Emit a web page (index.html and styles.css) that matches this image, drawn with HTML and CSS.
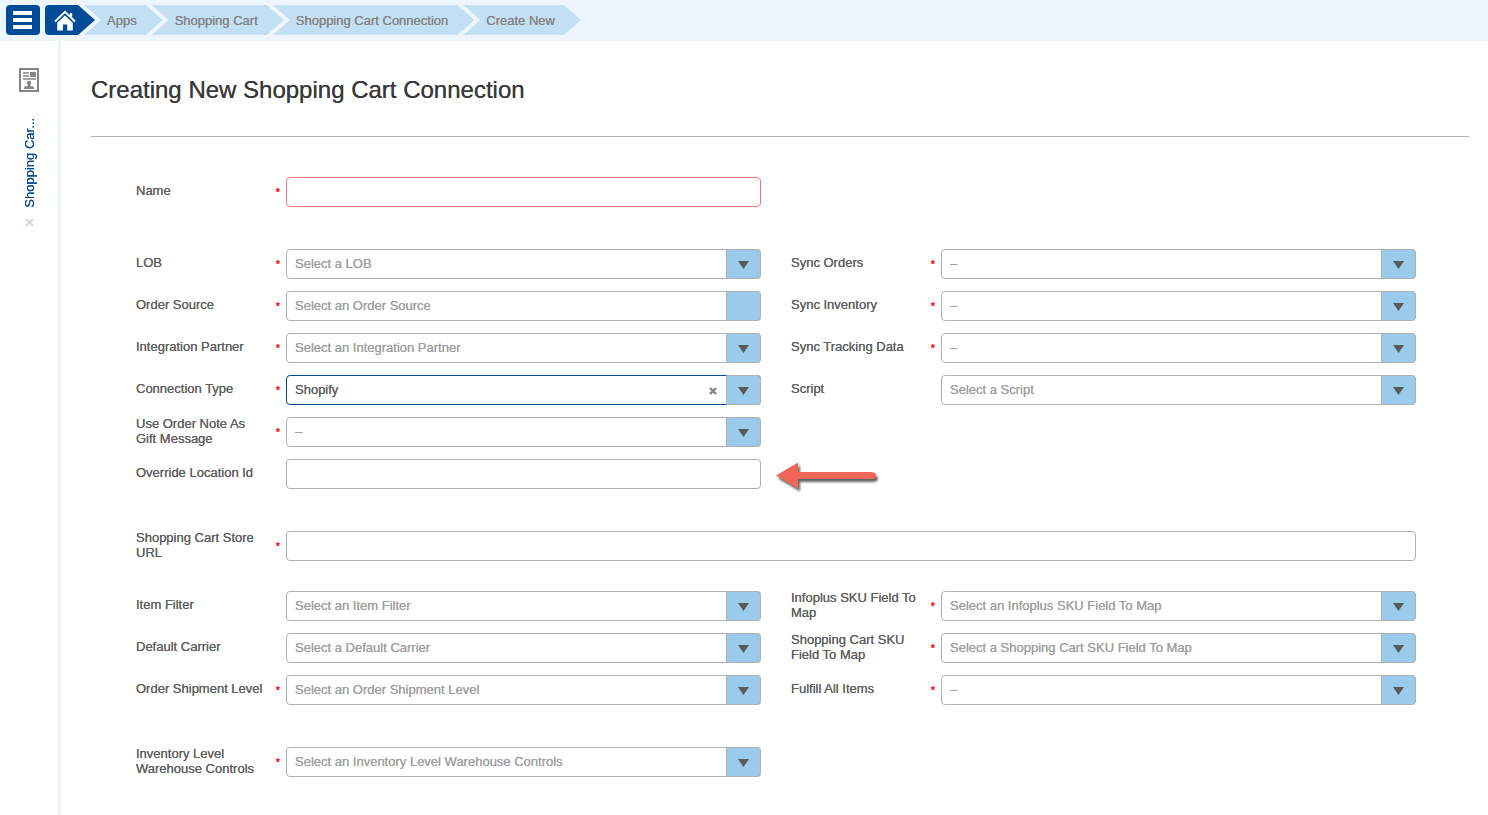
FILE: index.html
```html
<!DOCTYPE html>
<html lang="en">
<head>
<meta charset="utf-8">
<meta name="viewport" content="width=device-width, initial-scale=1">
<title>Creating New Shopping Cart Connection</title>
<link rel="stylesheet" href="styles.css">
</head>
<body>
<svg class="defs" aria-hidden="true">
  <symbol id="caret" viewBox="0 0 11 8"><path d="M0 0h11L5.500 8z" fill="#5a5a5a"/></symbol>
</svg>
<header class="topbar">
  <button class="menu" type="button" aria-label="Menu">
    <svg width="20" height="18" viewBox="0 0 20 18"><path d="M0 0h19v4H0zM0 7h19v4H0zM0 14h19v4H0z" fill="#fff"/></svg>
  </button>
  <nav class="crumbs" aria-label="Breadcrumb">
    <a class="home" href="#" aria-label="Home">
      <svg width="22" height="21" viewBox="0 0 22 21"><path d="M1 11.500L11 1.800l10 9.700" fill="none" stroke="#fff" stroke-width="2"/><path d="M15.800 3h2.400v4.500l-2.400-2.300z" fill="#fff"/><path d="M3.200 12.800L11 5.600l7.800 7.200V20.500h-5.600v-6H9v6H3.200z" fill="#fff"/></svg>
    </a>
    <a class="crumb" href="#">Apps</a>
    <a class="crumb" href="#">Shopping Cart</a>
    <a class="crumb" href="#">Shopping Cart Connection</a>
    <a class="crumb" href="#">Create New</a>
  </nav>
</header>
<div class="body">
  <aside class="side">
    <svg width="20" height="24" viewBox="0 0 20 24"><path d="M1 1h18v22H1z" fill="#fff" stroke="#858585" stroke-width="2"/><path d="M4 5h6M4 8h6M4 11h13" stroke="#858585" stroke-width="1.400"/><path d="M11 4h6v5h-6z" fill="#858585"/><circle cx="10" cy="15" r="2.200" fill="#858585"/><path d="M9 16h2l.5 2.300h3L15 21H5l.5-2.700h3z" fill="#858585"/></svg>
    <a class="tab" href="#">Shopping Car...</a>
    <button class="close" type="button" aria-label="Close tab">
      <svg width="9" height="9" viewBox="0 0 9 9"><path d="M1 1l7 7M8 1L1 8" stroke="#c9d8e8" stroke-width="1.800"/></svg>
    </button>
  </aside>
  <main class="main">
    <h1>Creating New Shopping Cart Connection</h1>
    <form class="form">
      <div class="cols">
        <div class="col">
          <div class="row"><label for="name">Name</label><i class="req">*</i><input class="field invalid" id="name" type="text"></div>
        </div>
      </div>
      <div class="cols">
        <div class="col">
          <div class="row"><label for="lob">LOB</label><i class="req">*</i><div class="combo"><select class="field" id="lob"><option>Select a LOB</option></select><span class="drop"><svg><use href="#caret"/></svg></span></div></div>
          <div class="row"><label for="source">Order Source</label><i class="req">*</i><div class="combo"><select class="field" id="source"><option>Select an Order Source</option></select><span class="drop"></span></div></div>
          <div class="row"><label for="partner">Integration Partner</label><i class="req">*</i><div class="combo"><select class="field" id="partner"><option>Select an Integration Partner</option></select><span class="drop"><svg><use href="#caret"/></svg></span></div></div>
          <div class="row"><label for="type">Connection Type</label><i class="req">*</i><div class="combo"><select class="field active" id="type"><option>Shopify</option></select><button class="clear" type="button" aria-label="Clear"><svg width="8" height="8" viewBox="0 0 8 8"><path d="M1 1l6 6M7 1L1 7" stroke="#858585" stroke-width="2.400"/></svg></button><span class="drop"><svg><use href="#caret"/></svg></span></div></div>
          <div class="row"><label for="note">Use Order Note As Gift Message</label><i class="req">*</i><div class="combo"><select class="field" id="note"><option>–</option></select><span class="drop"><svg><use href="#caret"/></svg></span></div></div>
          <div class="row"><label for="location">Override Location Id</label><i class="req"></i><input class="field" id="location" type="text">
            <svg class="pointer" width="106" height="32" viewBox="0 0 106 32" aria-hidden="true"><path d="M1 15.500L23 2.500V12H97Q101 12.500 101 15.500T97 19H23V28.500z" fill="#f16657"/></svg>
          </div>
        </div>
        <div class="col">
          <div class="row"><label for="orders">Sync Orders</label><i class="req">*</i><div class="combo"><select class="field" id="orders"><option>–</option></select><span class="drop"><svg><use href="#caret"/></svg></span></div></div>
          <div class="row"><label for="inventory">Sync Inventory</label><i class="req">*</i><div class="combo"><select class="field" id="inventory"><option>–</option></select><span class="drop"><svg><use href="#caret"/></svg></span></div></div>
          <div class="row"><label for="tracking">Sync Tracking Data</label><i class="req">*</i><div class="combo"><select class="field" id="tracking"><option>–</option></select><span class="drop"><svg><use href="#caret"/></svg></span></div></div>
          <div class="row"><label for="script">Script</label><i class="req"></i><div class="combo"><select class="field" id="script"><option>Select a Script</option></select><span class="drop"><svg><use href="#caret"/></svg></span></div></div>
        </div>
      </div>
      <div class="stack">
        <div class="row"><label for="url">Shopping Cart Store URL</label><i class="req">*</i><input class="field" id="url" type="text"></div>
        <div class="cols">
          <div class="col">
            <div class="row"><label for="filter">Item Filter</label><i class="req"></i><div class="combo"><select class="field" id="filter"><option>Select an Item Filter</option></select><span class="drop"><svg><use href="#caret"/></svg></span></div></div>
            <div class="row"><label for="carrier">Default Carrier</label><i class="req"></i><div class="combo"><select class="field" id="carrier"><option>Select a Default Carrier</option></select><span class="drop"><svg><use href="#caret"/></svg></span></div></div>
            <div class="row"><label for="level">Order Shipment Level</label><i class="req">*</i><div class="combo"><select class="field" id="level"><option>Select an Order Shipment Level</option></select><span class="drop"><svg><use href="#caret"/></svg></span></div></div>
          </div>
          <div class="col">
            <div class="row"><label for="isku">Infoplus SKU Field To Map</label><i class="req">*</i><div class="combo"><select class="field" id="isku"><option>Select an Infoplus SKU Field To Map</option></select><span class="drop"><svg><use href="#caret"/></svg></span></div></div>
            <div class="row"><label for="csku">Shopping Cart SKU Field To Map</label><i class="req">*</i><div class="combo"><select class="field" id="csku"><option>Select a Shopping Cart SKU Field To Map</option></select><span class="drop"><svg><use href="#caret"/></svg></span></div></div>
            <div class="row"><label for="fulfill">Fulfill All Items</label><i class="req">*</i><div class="combo"><select class="field" id="fulfill"><option>–</option></select><span class="drop"><svg><use href="#caret"/></svg></span></div></div>
          </div>
        </div>
      </div>
      <div class="cols">
        <div class="col">
          <div class="row"><label for="controls">Inventory Level Warehouse Controls</label><i class="req">*</i><div class="combo"><select class="field" id="controls"><option>Select an Inventory Level Warehouse Controls</option></select><span class="drop"><svg><use href="#caret"/></svg></span></div></div>
        </div>
      </div>
    </form>
  </main>
</div>
</body>
</html>
```
FILE: styles.css
```css
* { box-sizing: border-box; }

body {
  display: flex;
  flex-direction: column;
  min-height: 100vh;
  margin: 0;
  background: #fff;
  color: #606060;
  font: 13px/15px "Liberation Sans", Arial, sans-serif;
}

a { text-decoration: none; }

button {
  padding: 0;
  border: 0;
  background: none;
  cursor: pointer;
}

h1,
label,
.crumb,
.tab,
.field {
  text-shadow: 0 0 0 currentColor;
}

.defs {
  position: absolute;
  width: 0;
  height: 0;
}

.topbar {
  display: flex;
  gap: 5px;
  padding: 5px 6px 6px;
  background: #edf5ff;
}

.menu {
  display: grid;
  place-items: center;
  width: 34px;
  height: 30px;
  border-radius: 4px;
  background: #004b98;
}

.crumbs { display: flex; }

.home,
.crumb {
  display: flex;
  align-items: center;
  height: 30px;
}

.home {
  width: 50px;
  padding-left: 9px;
  border-radius: 4px 0 0 4px;
  background: #004b98;
  clip-path: polygon(0 0, calc(100% - 17px) 0, 100% 50%, calc(100% - 17px) 100%, 0 100%);
}

.crumb {
  margin-left: -11px;
  padding: 0 26px 0 23px;
  background: #c2dff4;
  color: #858585;
  white-space: nowrap;
  clip-path: polygon(0 0, calc(100% - 17px) 0, 100% 50%, calc(100% - 17px) 100%, 0 100%, 17px 50%);
}

.body {
  display: flex;
  flex: 1;
}

.side {
  display: flex;
  flex-direction: column;
  align-items: center;
  width: 61px;
  padding-top: 27px;
  border-right: 3px solid #e9f3ff;
}

.tab {
  margin-top: 26px;
  color: #004b98;
  writing-mode: vertical-rl;
  transform: rotate(180deg);
}

.close {
  display: flex;
  margin-top: 10px;
}

.main {
  flex: 1;
  min-width: 0;
  padding: 35px 19px 38px 30px;
}

h1 {
  margin: 0;
  padding-bottom: 32px;
  border-bottom: 1px solid #b0b0b0;
  color: #3a3a3a;
  font-size: 24px;
  font-weight: 400;
  line-height: 28px;
}

.form {
  display: flex;
  flex-direction: column;
  gap: 42px;
  padding: 40px 53px 0 45px;
}

.stack {
  display: flex;
  flex-direction: column;
  gap: 30px;
}

.cols {
  display: grid;
  grid-template-columns: 1fr 1fr;
  gap: 30px;
}

.col {
  display: flex;
  flex-direction: column;
  gap: 12px;
}

.row {
  position: relative;
  display: grid;
  grid-template-columns: 130px 20px minmax(0, 1fr);
  align-items: center;
  min-height: 30px;
}

.row label { margin-top: -3px; }

.req {
  padding-left: 4px;
  color: #f00;
  font-size: 11px;
  font-style: normal;
  font-weight: 700;
  text-align: center;
}

.field {
  width: 100%;
  height: 30px;
  padding: 0 8px 2px;
  border: 1px solid #b0b0b0;
  border-radius: 4px;
  outline: 0;
  background: #fff;
  color: #a0a0a0;
  font: inherit;
  appearance: none;
}

.invalid { border-color: #f0777a; }

.combo { display: grid; }

.combo > * { grid-area: 1 / 1; }

.active {
  border-color: #004b98;
  color: #606060;
}

.drop {
  display: grid;
  place-items: center;
  justify-self: end;
  width: 35px;
  border: 1px solid #b0b0b0;
  border-radius: 0 4px 4px 0;
  background: #9acbeb;
  pointer-events: none;
}

.drop svg {
  width: 11px;
  height: 8px;
  margin-top: 2px;
}

.clear {
  display: flex;
  place-self: center end;
  margin: 2px 44px 0 0;
}

.pointer {
  position: absolute;
  top: 1px;
  left: calc(100% + 14px);
  filter: drop-shadow(2px 3px 1px rgba(0, 0, 0, 0.6));
}

@media (max-width: 900px) {
  .cols { grid-template-columns: 1fr; }
  .pointer { display: none; }
}
```
